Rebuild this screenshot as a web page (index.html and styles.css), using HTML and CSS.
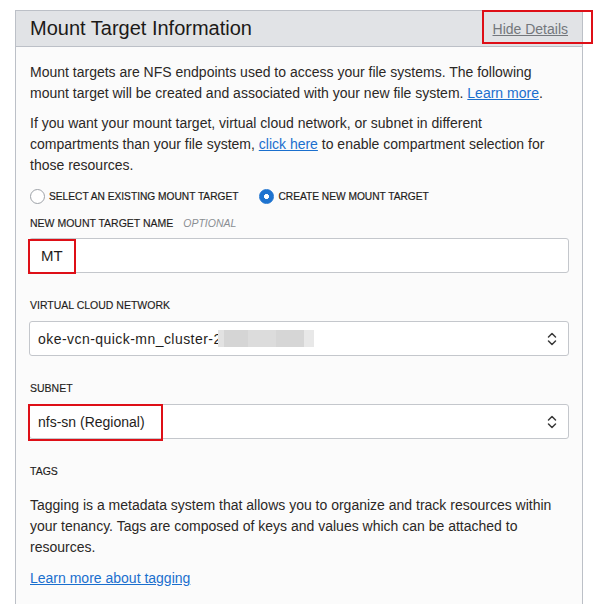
FILE: index.html
```html
<!DOCTYPE html>
<html>
<head>
<meta charset="utf-8">
<link rel="stylesheet" href="styles.css">
</head>
<body>
<div class="panel">
  <div class="panel-head">
    <h2 class="title">Mount Target Information</h2>
    <a class="hide-link" href="#">Hide Details<span class="mark mark-hide"></span></a>
  </div>
  <div class="panel-body">
    <p class="para">Mount targets are NFS endpoints used to access your file systems. The following mount target will be created and associated with your new file system. <a class="link" href="#">Learn more</a>.</p>
    <p class="para">If you want your mount target, virtual cloud network, or subnet in different compartments than your file system, <a class="link" href="#">click here</a> to enable compartment selection for those resources.</p>
    <div class="radios">
      <label class="radio"><span class="dot"></span>SELECT AN EXISTING MOUNT TARGET</label>
      <label class="radio"><span class="dot on"></span>CREATE NEW MOUNT TARGET</label>
    </div>
    <div class="field first">
      <div class="label">NEW MOUNT TARGET NAME <span class="opt">OPTIONAL</span></div>
      <div class="control">MT<span class="mark mark-mt"></span></div>
    </div>
    <div class="field">
      <div class="label">VIRTUAL CLOUD NETWORK</div>
      <div class="control select">
        <span class="val"><span class="vcn">oke-vcn-quick-mn_cluster-2</span><span class="blur b1"></span><span class="blur b2"></span><span class="blur b3"></span><span class="blur b4"></span><span class="blur b5"></span></span>
        <svg class="chev" width="10" height="14" viewBox="0 0 10 14"><path d="M1.5 5 L5 1.5 L8.5 5 M1.5 9 L5 12.5 L8.5 9" fill="none" stroke="#3a3a3a" stroke-width="1.5" stroke-linecap="round" stroke-linejoin="round"/></svg>
      </div>
    </div>
    <div class="field">
      <div class="label">SUBNET</div>
      <div class="control select">
        <span class="val">nfs-sn (Regional)</span>
        <svg class="chev" width="10" height="14" viewBox="0 0 10 14"><path d="M1.5 5 L5 1.5 L8.5 5 M1.5 9 L5 12.5 L8.5 9" fill="none" stroke="#3a3a3a" stroke-width="1.5" stroke-linecap="round" stroke-linejoin="round"/></svg>
        <span class="mark mark-subnet"></span>
      </div>
    </div>
    <div class="field tags">
      <div class="label">TAGS</div>
      <p class="para tagtext">Tagging is a metadata system that allows you to organize and track resources within your tenancy. Tags are composed of keys and values which can be attached to resources.</p>
      <a class="link tag-link" href="#">Learn more about tagging</a>
    </div>
  </div>
</div>
</body>
</html>
```
FILE: styles.css
```css
html, body {
  margin: 0;
  padding: 0;
  background: #ffffff;
}
body {
  font-family: "Liberation Sans", Arial, sans-serif;
  color: #2b2826;
  padding: 10px 0 0 15px;
}
.panel {
  width: 566px;
  border: 1px solid #bcc0c7;
  border-bottom: none;
  background: #fbfbfb;
  min-height: 700px;
}
.panel-head {
  height: 35px;
  background: #e1e3e6;
  border-bottom: 1px solid #bcc0c7;
  display: flex;
  align-items: center;
  justify-content: space-between;
  padding: 0 14px 0 14px;
}
.title {
  margin: 0;
  font-size: 20px;
  font-weight: normal;
  color: #1c1a18;
  letter-spacing: 0;
}
.hide-link {
  position: relative;
  font-size: 14px;
  color: #73777c;
  text-decoration: underline;
  margin-top: 1px;
}
.mark {
  position: absolute;
  border: 2px solid #de0f17;
  box-sizing: border-box;
  pointer-events: none;
}
.mark-hide {
  left: -11px;
  top: -11px;
  width: 111px;
  height: 34px;
}
.panel-body {
  padding: 15px 13px 0 13px;
}
.para {
  margin: 0 0 9px 0;
  font-size: 14px;
  line-height: 21px;
  padding-left: 1px;
}
.link {
  color: #1a6fce;
  text-decoration: underline;
}
.radios {
  display: flex;
  gap: 21px;
  margin-top: 12px;
  height: 16px;
  align-items: center;
  padding-left: 1px;
}
.radio {
  display: flex;
  align-items: center;
  gap: 4px;
  font-size: 10.2px;
  color: #1f1d1b;
  -webkit-text-stroke: 0.2px #1f1d1b;
}
.dot {
  width: 13px;
  height: 13px;
  border: 1px solid #9ea2a8;
  border-radius: 50%;
  background: #fff;
  box-sizing: content-box;
}
.dot.on {
  border-color: #1e73cf;
  background: radial-gradient(circle, #ffffff 0 2.2px, #1e73cf 2.8px);
}
.field {
  margin-top: 25px;
}
.field.first {
  margin-top: 12px;
}
.label {
  font-size: 10.5px;
  line-height: 14px;
  color: #1f1d1b;
  margin-bottom: 9px;
  padding-left: 1px;
  -webkit-text-stroke: 0.15px #1f1d1b;
}
.first .label {
  margin-bottom: 8px;
}
.opt {
  font-style: italic;
  color: #8a8e93;
  margin-left: 7px;
  font-size: 10.5px;
  -webkit-text-stroke: 0;
}
.control {
  position: relative;
  height: 35px;
  box-sizing: border-box;
  border: 1px solid #c4c7cc;
  border-radius: 3px;
  background: #ffffff;
  display: flex;
  align-items: center;
  padding-left: 11px;
  font-size: 15px;
  color: #1f1d1b;
}
.mark-mt {
  left: -2px;
  top: 0;
  width: 48px;
  height: 35px;
}
.select {
  justify-content: space-between;
  padding-right: 11px;
  padding-left: 8px;
  font-size: 14px;
}
.val {
  display: flex;
  align-items: center;
}
.vcn {
  letter-spacing: 0.45px;
}
.blur {
  display: inline-block;
  height: 17px;
}
.b1 { width: 6px; background: #e2e2e2; margin-left: -4px; }
.b2 { width: 24px; background: #d5d5d5; }
.b3 { width: 28px; background: #dcdcdc; }
.b4 { width: 28px; background: #d6d6d6; }
.b5 { width: 10px; background: #e8e8e8; }
.chev {
  display: block;
}
.mark-subnet {
  left: -2px;
  top: -1px;
  width: 135px;
  height: 37px;
}
.tagtext {
  margin-top: 17px;
  margin-bottom: 10px;
}
.tag-link {
  font-size: 14px;
  line-height: 21px;
  display: inline-block;
  padding-left: 1px;
}
```
